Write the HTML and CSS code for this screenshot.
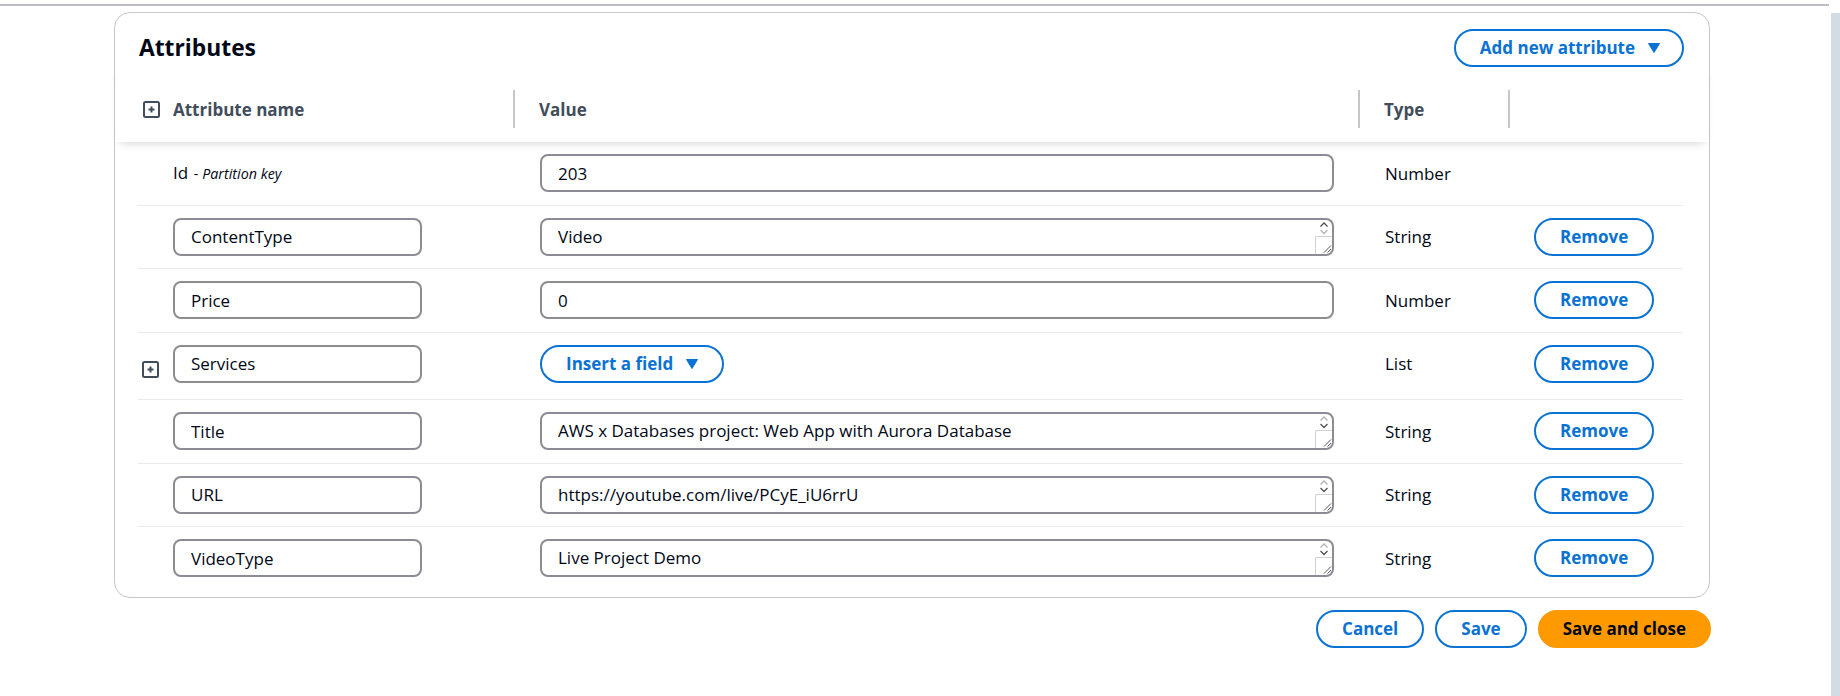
FILE: index.html
```html
<!DOCTYPE html>
<html lang="en">
<head>
<meta charset="utf-8">
<title>Attributes</title>
<link rel="stylesheet" href="styles.css">
</head>
<body>
<div class="page">
  <div class="main">
    <div class="topline"></div>
    <section class="card">
      <div class="card-header">
        <h2 class="title">Attributes</h2>
        <button class="btn btn-menu">Add new attribute <svg class="caret" width="12" height="10" viewBox="0 0 12 10"><polygon points="0.5,0.5 11.5,0.5 6,9.5" fill="currentColor" stroke="currentColor" stroke-linejoin="round"/></svg></button>
      </div>
      <div class="table-head">
        <div class="th th-name"><svg class="expand" width="17" height="17" viewBox="0 0 17 17"><rect x="1" y="1" width="15" height="15" rx="1.5" fill="none" stroke="#414d5c" stroke-width="2"/><path d="M8.5 5.5V11.5M5.5 8.5H11.5" stroke="#414d5c" stroke-width="2"/></svg><span>Attribute name</span></div>
        <div class="th th-div">Value</div>
        <div class="th th-div">Type</div>
        <div class="th th-div"></div>
      </div>

      <div class="row">
        <div class="cell-name"><span class="icon-slot"></span><span class="key-name">Id<span class="key-note"> - <i>Partition key</i></span></span></div>
        <div class="cell-value"><input class="field field-value" value="203"></div>
        <div class="cell-type">Number</div>
        <div class="cell-action"></div>
      </div>

      <div class="row">
        <div class="cell-name"><span class="icon-slot"></span><input class="field field-name" value="ContentType"></div>
        <div class="cell-value"><div class="ta-wrap"><textarea class="field field-area">Video</textarea><svg class="ta-deco" width="17" height="34" viewBox="0 0 17 34"><polyline points="5.5,6.5 9,3 12.5,6.5" fill="none" stroke="#505050" stroke-width="1.3"/><polyline points="5.5,10 9,13.5 12.5,10" fill="none" stroke="#b4b4b4" stroke-width="1.3"/><path d="M0.5 34V16.5H17" fill="none" stroke="#d2d2d2"/><path d="M9 32.5L16 25.5M12.5 32.5L16 29" stroke="#555" stroke-width="1"/></svg></div></div>
        <div class="cell-type">String</div>
        <div class="cell-action"><button class="btn">Remove</button></div>
      </div>

      <div class="row">
        <div class="cell-name"><span class="icon-slot"></span><input class="field field-name" value="Price"></div>
        <div class="cell-value"><input class="field field-value" value="0"></div>
        <div class="cell-type">Number</div>
        <div class="cell-action"><button class="btn">Remove</button></div>
      </div>

      <div class="row row-list">
        <div class="cell-name"><span class="icon-slot"><svg class="expand expand-low" width="17" height="17" viewBox="0 0 17 17"><rect x="1" y="1" width="15" height="15" rx="1.5" fill="none" stroke="#414d5c" stroke-width="2"/><path d="M8.5 5.5V11.5M5.5 8.5H11.5" stroke="#414d5c" stroke-width="2"/></svg></span><input class="field field-name" value="Services"></div>
        <div class="cell-value"><button class="btn">Insert a field <svg class="caret" width="12" height="10" viewBox="0 0 12 10"><polygon points="0.5,0.5 11.5,0.5 6,9.5" fill="currentColor" stroke="currentColor" stroke-linejoin="round"/></svg></button></div>
        <div class="cell-type">List</div>
        <div class="cell-action"><button class="btn">Remove</button></div>
      </div>

      <div class="row">
        <div class="cell-name"><span class="icon-slot"></span><input class="field field-name" value="Title"></div>
        <div class="cell-value"><div class="ta-wrap"><textarea class="field field-area">AWS x Databases project: Web App with Aurora Database</textarea><svg class="ta-deco" width="17" height="34" viewBox="0 0 17 34"><polyline points="5.5,6.5 9,3 12.5,6.5" fill="none" stroke="#b4b4b4" stroke-width="1.3"/><polyline points="5.5,10 9,13.5 12.5,10" fill="none" stroke="#505050" stroke-width="1.3"/><path d="M0.5 34V16.5H17" fill="none" stroke="#d2d2d2"/><path d="M9 32.5L16 25.5M12.5 32.5L16 29" stroke="#555" stroke-width="1"/></svg></div></div>
        <div class="cell-type">String</div>
        <div class="cell-action"><button class="btn">Remove</button></div>
      </div>

      <div class="row">
        <div class="cell-name"><span class="icon-slot"></span><input class="field field-name" value="URL"></div>
        <div class="cell-value"><div class="ta-wrap"><textarea class="field field-area">https://youtube.com/live/PCyE_iU6rrU</textarea><svg class="ta-deco" width="17" height="34" viewBox="0 0 17 34"><polyline points="5.5,6.5 9,3 12.5,6.5" fill="none" stroke="#b4b4b4" stroke-width="1.3"/><polyline points="5.5,10 9,13.5 12.5,10" fill="none" stroke="#505050" stroke-width="1.3"/><path d="M0.5 34V16.5H17" fill="none" stroke="#d2d2d2"/><path d="M9 32.5L16 25.5M12.5 32.5L16 29" stroke="#555" stroke-width="1"/></svg></div></div>
        <div class="cell-type">String</div>
        <div class="cell-action"><button class="btn">Remove</button></div>
      </div>

      <div class="row row-last">
        <div class="cell-name"><span class="icon-slot"></span><input class="field field-name" value="VideoType"></div>
        <div class="cell-value"><div class="ta-wrap"><textarea class="field field-area">Live Project Demo</textarea><svg class="ta-deco" width="17" height="34" viewBox="0 0 17 34"><polyline points="5.5,6.5 9,3 12.5,6.5" fill="none" stroke="#b4b4b4" stroke-width="1.3"/><polyline points="5.5,10 9,13.5 12.5,10" fill="none" stroke="#505050" stroke-width="1.3"/><path d="M0.5 34V16.5H17" fill="none" stroke="#d2d2d2"/><path d="M9 32.5L16 25.5M12.5 32.5L16 29" stroke="#555" stroke-width="1"/></svg></div></div>
        <div class="cell-type">String</div>
        <div class="cell-action"><button class="btn">Remove</button></div>
      </div>
    </section>
    <div class="actions">
      <button class="btn">Cancel</button>
      <button class="btn">Save</button>
      <button class="btn btn-primary">Save and close</button>
    </div>
  </div>
  <div class="scrollbar"></div>
</div>
</body>
</html>
```

FILE: styles.css
```css
* { box-sizing: border-box; }
html, body { margin: 0; padding: 0; background: #ffffff; }
body {
  font-family: "Open Sans", "Noto Sans", sans-serif;
  font-size: 17px;
  color: #000716;
}
.page {
  display: flex;
  gap: 2px;
  height: 696px;
  overflow: hidden;
}
.main { flex: 1; }
.scrollbar {
  width: 9px;
  margin-top: 13px;
  background: #d3dbe3;
}
.topline {
  margin-top: 4px;
  height: 2px;
  background: #bdbdc3;
}
.card {
  margin: 6px 0 0 114px;
  width: 1596px;
  border: 1px solid #c6c6cd;
  border-radius: 16px;
  padding-bottom: 7px;
  background: #fff;
}
.card-header {
  display: flex;
  justify-content: space-between;
  align-items: center;
  padding: 16px 25px 0 24px;
}
.title {
  margin: 0;
  font-size: 22.8px;
  font-weight: 700;
  line-height: 38px;
  color: #000716;
}
.btn {
  display: inline-flex;
  align-items: center;
  gap: 13px;
  height: 38px;
  padding: 0 24px;
  border: 2px solid #0972d3;
  border-radius: 20px;
  background: #fff;
  color: #0972d3;
  font-family: inherit;
  font-size: 17px;
  font-weight: 700;
  line-height: 22px;
  white-space: nowrap;
}
.btn-menu { padding: 0 22px 0 24px; }
.btn-primary {
  background: #ff9900;
  border-color: #ff9900;
  color: #000716;
  padding: 0 23px;
}
.caret { display: block; }
.table-head {
  position: relative;
  z-index: 1;
  display: grid;
  grid-template-columns: 375px 845px 150px 175px;
  padding: 23px 26px 14px 23px;
  background: #fff;
  box-shadow: 0 5px 9px -5px rgba(0, 7, 22, 0.22);
}
.th {
  height: 38px;
  display: flex;
  align-items: center;
  font-weight: 700;
  color: #414d5c;
}
.th-name { padding-left: 5px; gap: 13px; }
.th-div {
  border-left: 2px solid #c6c6cd;
  padding-left: 24px;
}
.expand { display: block; }
.row {
  display: grid;
  grid-template-columns: 375px 845px 150px 175px;
  align-items: center;
  margin: 0 26px 0 23px;
  padding: 12px 0 12.5px;
  border-bottom: 1px solid #e9ebed;
}
.row-list { padding-bottom: 16.5px; }
.row-last { border-bottom: none; padding-bottom: 12.5px; }
.cell-name {
  display: grid;
  grid-template-columns: 35px 249px;
  align-items: center;
}
.icon-slot { padding-left: 4px; }
.expand-low { margin-top: 12px; }
.key-name { line-height: 22px; }
.key-note { font-size: 14.3px; margin-left: 2px; }
.cell-value { padding-left: 27px; }
.cell-type { padding-left: 27px; }
.cell-action { padding-left: 26px; }
.field {
  display: block;
  height: 38px;
  border: 2px solid #8c8c94;
  border-radius: 8px;
  padding: 0 16px;
  background: #fff;
  font-family: inherit;
  font-size: 17px;
  color: #000716;
  outline: none;
}
.field-name { width: 249px; }
.field-value { width: 794px; }
.ta-wrap {
  position: relative;
  width: 794px;
  height: 38px;
}
.field-area {
  width: 794px;
  padding: 5px 16px;
  line-height: 24px;
  resize: none;
  overflow: hidden;
  white-space: nowrap;
}
.ta-deco {
  position: absolute;
  right: 2px;
  top: 2px;
}
.actions {
  display: flex;
  justify-content: flex-end;
  gap: 11px;
  width: 1597px;
  margin: 12px 0 0 114px;
}
```
